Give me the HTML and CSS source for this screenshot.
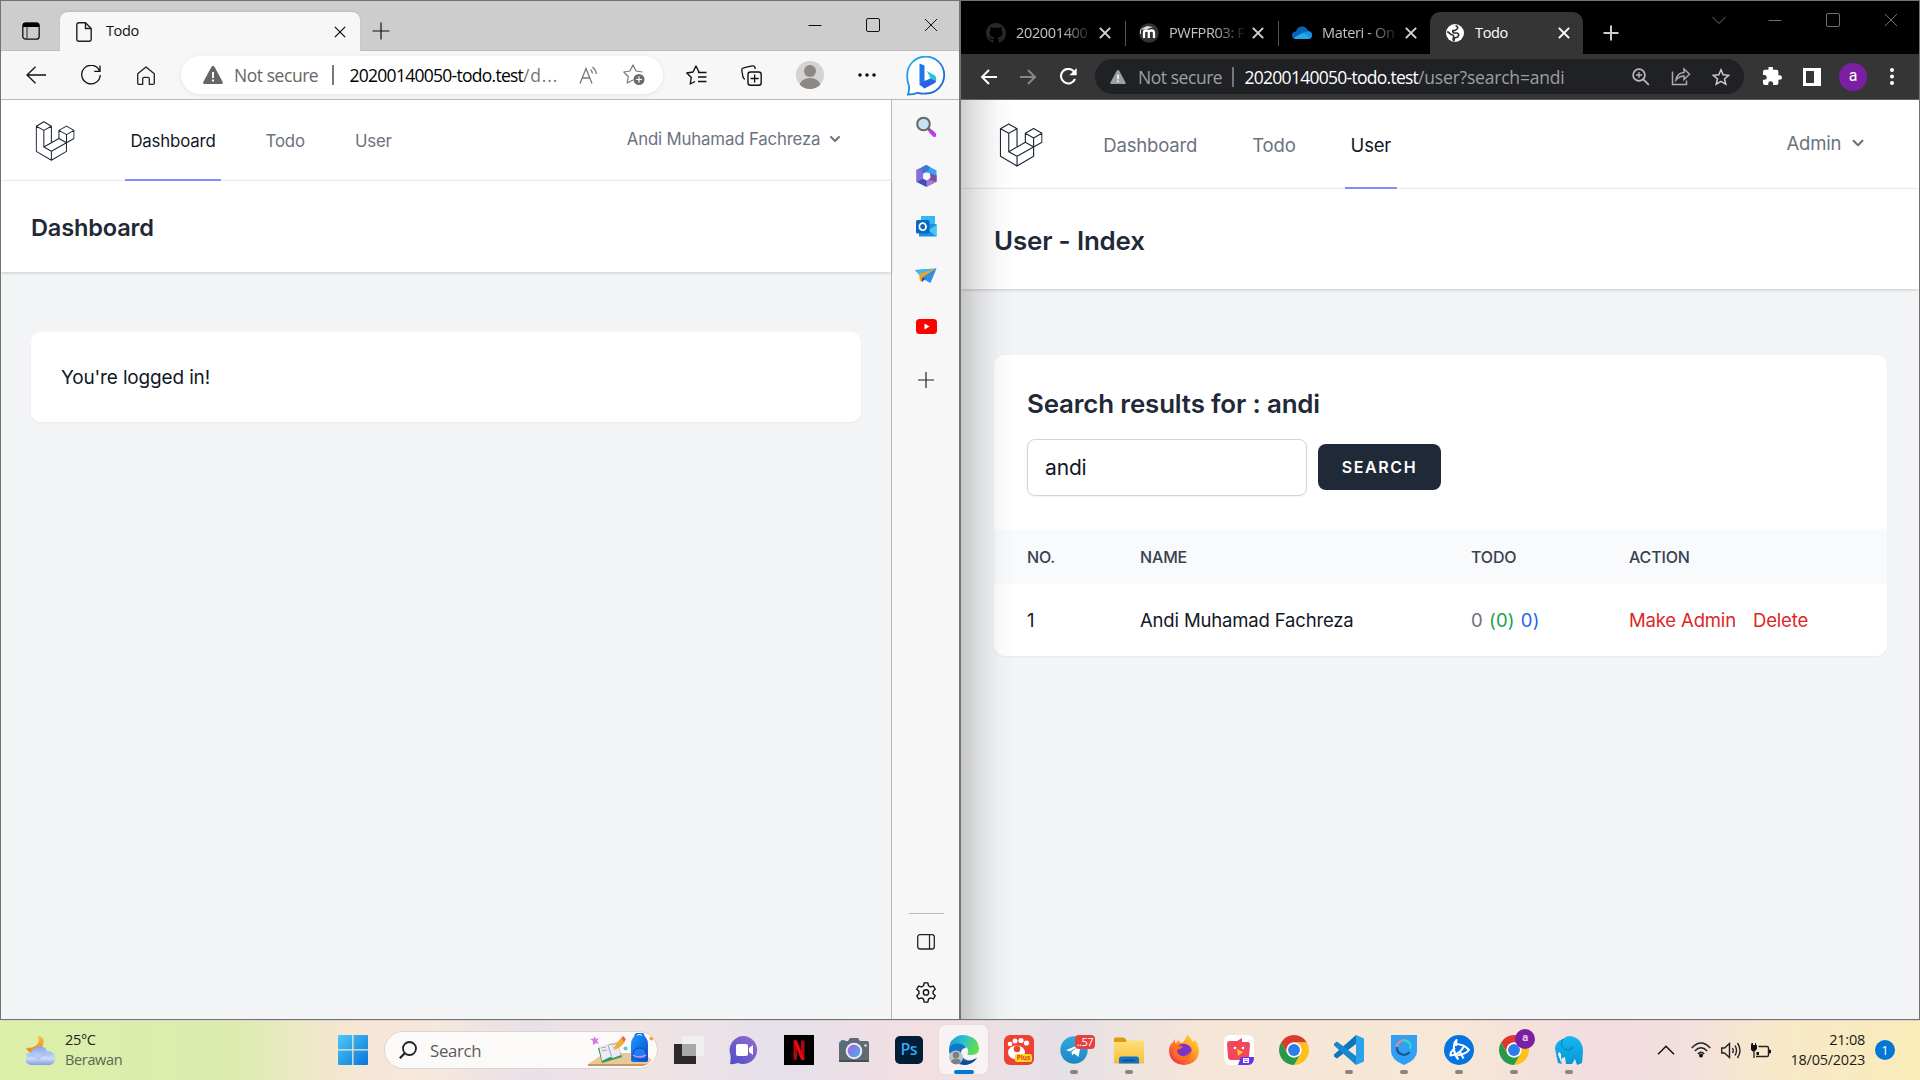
FILE: index.html
```
<!DOCTYPE html>
<html lang="en">
<head>
<meta charset="utf-8">
<title>Desktop</title>
<link rel="stylesheet" href="styles.css">
</head>
<body>
<svg class="defs" aria-hidden="true">
  <defs>
    <linearGradient id="gBlue" x1="0" y1="0" x2="1" y2="1"><stop offset="0" stop-color="#4cc9f8"/><stop offset="1" stop-color="#0a74d8"/></linearGradient>
    <linearGradient id="gBing" x1="0" y1="0" x2="1" y2="1"><stop offset="0" stop-color="#28b8f4"/><stop offset="1" stop-color="#1c50d0"/></linearGradient>
    <linearGradient id="gMoon" x1="0" y1="0" x2="0" y2="1"><stop offset="0" stop-color="#f7bd3c"/><stop offset="1" stop-color="#ee8420"/></linearGradient>
    <linearGradient id="gCloud" x1="0" y1="0" x2="0" y2="1"><stop offset="0" stop-color="#86a5e8"/><stop offset=".65" stop-color="#cbdcf8"/><stop offset="1" stop-color="#7f9fe4"/></linearGradient>
    <linearGradient id="gChat" x1="1" y1="0" x2="0" y2="1"><stop offset="0" stop-color="#9b6ccc"/><stop offset="1" stop-color="#4a4fc8"/></linearGradient>
    <linearGradient id="gLens" x1="0" y1="0" x2="1" y2="1"><stop offset="0" stop-color="#b05ce0"/><stop offset="1" stop-color="#3fb4ee"/></linearGradient>
    <linearGradient id="gEdge" x1="0" y1="0" x2="1" y2="0.3"><stop offset="0" stop-color="#1693dc"/><stop offset=".5" stop-color="#2cc0d0"/><stop offset="1" stop-color="#5fdc50"/></linearGradient>
    <linearGradient id="gTg" x1="0" y1="0" x2="0" y2="1"><stop offset="0" stop-color="#32a9dd"/><stop offset="1" stop-color="#1b86c4"/></linearGradient>
    <linearGradient id="gFolder" x1="0" y1="0" x2="0" y2="1"><stop offset="0" stop-color="#ffe07a"/><stop offset="1" stop-color="#f6bf3a"/></linearGradient>
    <linearGradient id="gFox" x1="1" y1="0" x2="0" y2="1"><stop offset="0" stop-color="#ffe840"/><stop offset=".5" stop-color="#ff8a1e"/><stop offset="1" stop-color="#f0185c"/></linearGradient>
    <linearGradient id="gBag" x1="0" y1="0" x2="1" y2="1"><stop offset="0" stop-color="#1a98ff"/><stop offset="1" stop-color="#0a4ec8"/></linearGradient>
    <linearGradient id="gEle" x1="0" y1="0" x2="0" y2="1"><stop offset="0" stop-color="#14b8f2"/><stop offset="1" stop-color="#0897d4"/></linearGradient>
    <symbol id="laravel" viewBox="0 0 120 122">
      <path fill="none" stroke="#1f2937" stroke-width="3.2" stroke-linejoin="round" d="M26 2.500 49 16 26 28.500 3 16ZM3 16V92.500L49 119.500 95 92.500V66.500M26 28.500V79.500L49 92.500 95 66.500M49 16V66.500M26 79.500 72 53.500 95 66.500M49 92.500V119.500M95 15.500 118 28.500 95 41.500 72 28.500ZM72 28.500V53.500M95 41.500V66.500L118 53.500V28.500"/>
    </symbol>
    <symbol id="chrome" viewBox="2 2 44 44">
      <path fill="#db3b2e" d="M4.950 13A22 22 0 0 1 43.050 13H24A11 11 0 0 0 14.470 29.500Z"/>
      <path fill="#fcc21b" d="M43.050 13A22 22 0 0 1 24 46L33.530 29.500A11 11 0 0 0 24 13Z"/>
      <path fill="#269a48" d="M24 46A22 22 0 0 1 4.950 13L14.470 29.500A11 11 0 0 0 33.530 29.500Z"/>
      <circle cx="24" cy="24" r="11" fill="#fff"/><circle cx="24" cy="24" r="8.700" fill="#2f7bea"/>
    </symbol>
    <symbol id="warn" viewBox="0 0 20 18"><path fill="currentColor" d="M10 0Q11 0 11.600 1L19.700 16Q20.300 18 18.600 18H1.400Q-.3 18 .3 16L8.400 1Q9 0 10 0Z"/><path class="warn-mark" d="M9 6h2v6H9zM9 13.500h2v2H9z"/></symbol>
    <symbol id="chev" viewBox="0 0 20 20"><path fill="currentColor" fill-rule="evenodd" d="M5.293 7.293a1 1 0 011.414 0L10 10.586l3.293-3.293a1 1 0 111.414 1.414l-4 4a1 1 0 01-1.414 0l-4-4a1 1 0 010-1.414z"/></symbol>
    <symbol id="cross" viewBox="0 0 14 14"><path fill="none" stroke="currentColor" d="M1 1 13 13M13 1 1 13"/></symbol>
    <symbol id="square" viewBox="0 0 14 14"><rect x=".5" y=".5" width="13" height="13" rx="1.500" fill="none" stroke="currentColor"/></symbol>
    <symbol id="dash" viewBox="0 0 14 14"><path stroke="currentColor" d="M.5 7.500h13"/></symbol>
  </defs>
</svg>

<main class="desktop">
  <section class="window edge">
    <div class="edge-tabs">
      <span class="edge-actions"><svg width="18" height="18" viewBox="0 0 18 18"><rect x=".8" y=".8" width="16.400" height="16.400" rx="3" fill="none" stroke="#111" stroke-width="1.300"/><path d="M1 1h16v4H1z" fill="#000"/><path d="M5 5v12" stroke="#222"/></svg></span>
      <div class="edge-tab">
        <svg width="16" height="20" viewBox="0 0 16 20"><path fill="none" stroke="#222" stroke-width="1.400" d="M3 .8H9.500L15.200 6.500V17Q15.200 19.200 13 19.200H3Q.8 19.200 .8 17V3Q.8 .8 3 .8ZM9.500 1V6.500H15"/></svg>
        <span class="tab-title">Todo</span>
        <svg class="tab-x" width="12" height="12"><use href="#cross"/></svg>
      </div>
      <svg class="edge-plus" width="18" height="18" viewBox="0 0 18 18"><path d="M9 .5v17M.5 9h17" stroke="#111" stroke-width="1.200"/></svg>
      <div class="win-controls">
        <svg width="14" height="14"><use href="#dash"/></svg><svg width="14" height="14"><use href="#square"/></svg><svg width="14" height="14"><use href="#cross"/></svg>
      </div>
    </div>
    <div class="edge-bar">
      <span class="cell"><svg width="20" height="18" viewBox="0 0 20 18"><path d="M20 9H1M9.500 .7 1 9l8.500 8.300" fill="none" stroke="#111" stroke-width="1.300"/></svg></span>
      <span class="cell"><svg width="20" height="20" viewBox="0 0 20 20"><path d="M18.600 6A9.300 9.300 0 1 0 19.300 10M19 .5V6.300H13.200" fill="none" stroke="#111" stroke-width="1.300"/></svg></span>
      <span class="cell"><svg width="18" height="19" viewBox="0 0 18 19"><path d="M9 .9 17.300 7.800V17Q17.300 18.300 16 18.300H12.300V12.500Q12.300 11.300 11 11.300H7Q5.700 11.300 5.700 12.500V18.300H2Q.7 18.300 .7 17V7.800Z" fill="none" stroke="#222" stroke-width="1.300" stroke-linejoin="round"/></svg></span>
      <div class="edge-url">
        <svg class="warn" width="20" height="18"><use href="#warn"/></svg>
        <span class="not-secure">Not secure</span><i class="url-sep"></i>
        <span class="url"><b>20200140050-todo.test</b><em>/d...</em></span>
        <svg class="read" width="20" height="18" viewBox="0 0 20 18"><path d="M1 17.500 7 2.500l6 15M3.200 12h7.600M11.500 3.500q1.700 1.500 2 4M13.500 1q3.500 3 3.800 7" fill="none" stroke="#777" stroke-width="1.300"/></svg>
        <svg width="22" height="22" viewBox="0 0 22 22"><path d="M19.500 8 13 7 10 1 7 7 .8 8l4.500 4.500L4.200 19 10 16" fill="none" stroke="#777" stroke-width="1.200" stroke-linejoin="round"/><circle cx="16" cy="15.500" r="5.500" fill="#6b6b6b"/><path d="M16 12.500v6M13 15.500h6" stroke="#fff" stroke-width="1.200"/></svg>
      </div>
      <span class="cell first"><svg width="21" height="20" viewBox="0 0 21 20"><path d="M13 7 10 1 7 7 .8 8l4.500 4.500L4.200 19 9 16.500M12 7.500h8.500M12 12h8.500M12 16.500h8.500" fill="none" stroke="#111" stroke-width="1.400" stroke-linejoin="round"/></svg></span>
      <span class="cell"><svg width="21" height="21" viewBox="0 0 21 21"><path d="M4 14Q2.500 14 2 12L.8 5.500Q.6 3.300 2.500 2.800L11 .9Q13.500 .5 14 2.500L14.300 4" fill="none" stroke="#111" stroke-width="1.300"/><rect x="7" y="7" width="13.200" height="13.200" rx="2.500" fill="none" stroke="#111" stroke-width="1.400"/><path d="M13.600 9.500v8M9.600 13.500h8" stroke="#111" stroke-width="1.300"/></svg></span>
      <span class="cell wide"><svg width="28" height="28" viewBox="0 0 28 28"><clipPath id="av"><circle cx="14" cy="14" r="14"/></clipPath><g clip-path="url(#av)"><rect width="28" height="28" fill="#d5d3d0"/><circle cx="14" cy="10" r="6" fill="#8c8885"/><ellipse cx="14" cy="25" rx="10.500" ry="8" fill="#8c8885"/></g></svg></span>
      <span class="cell dots"><svg width="18" height="4" viewBox="0 0 18 4"><g fill="#111"><circle cx="2" cy="2" r="1.800"/><circle cx="9" cy="2" r="1.800"/><circle cx="16" cy="2" r="1.800"/></g></svg></span>
      <span class="cell bing"><svg width="40" height="40" viewBox="0 0 40 40"><path d="M2 38.500Q3.500 34 3 30Q1 25 1.200 19.500A18.500 18.500 0 1 1 20 37.500Q16 38 12 36.800Q7 38.500 2 38.500Z" fill="#fff" stroke="url(#gBing)" stroke-width="1.800"/><path d="M13.500 7.500 18.500 9.500V31.500L13.500 28.500Z" fill="#2175ea"/><path d="M13.500 28.500 18.500 25 29 20.500Q31.500 24 29 27L18.500 32.500Z" fill="#2a62e4"/><path d="M21 15 29 19.500Q31 22 29.500 25L24.500 22.500Z" fill="#2cc6dc"/></svg></span>
    </div>
    <div class="edge-body">
      <div class="page page-left">
        <nav class="nav">
          <svg class="logo" viewBox="0 0 120 122"><use href="#laravel"/></svg>
          <a class="active">Dashboard</a><a>Todo</a><a>User</a>
          <span class="account">Andi Muhamad Fachreza<svg class="chev"><use href="#chev"/></svg></span>
        </nav>
        <header class="page-head"><h2>Dashboard</h2></header>
        <div class="card note">You're logged in!</div>
      </div>
      <aside class="side">
        <span class="side-cell"><svg width="20" height="21" viewBox="0 0 20 21"><circle cx="7.500" cy="8" r="6.300" fill="#c3e4f7" stroke="#666" stroke-width="2"/><path d="m12 12.500 3 3" stroke="#666" stroke-width="3"/><path d="m15 15.500 3.500 3.500" stroke="#bd39ee" stroke-width="4" stroke-linecap="round"/></svg></span>
        <span class="side-cell"><svg width="21" height="22" viewBox="0 0 21 22"><path d="M8 1 10.500 0 20.500 5.500V14L14 11V8.500L8 8Z" fill="#35a4ea"/><path d="M8 1 .5 5V17L7 13.500V9L13 5V1.500L10.500 0Z" fill="#3f78d4"/><path d="M.5 5 5 3 7 9V13.500L.5 17Z" fill="#8a6bd8"/><path d="M7 19 10.500 22 20.500 17V10.500L14.500 8.500V13L10.500 15.500 7 17Z" fill="#a779d8"/><path d="M.5 17 7 13.500 10.500 15.500V22Z" fill="#3a50c0"/><path d="m20.500 10.500-6-2V13l-2 1.500 8 2.500Z" fill="#7a4fa8"/><circle cx="10.500" cy="11" r="3.600" fill="#f7f7f7"/></svg></span>
        <span class="side-cell"><svg width="21" height="21" viewBox="0 0 21 21"><path d="M5 0H19V10H5Z" fill="#35b8f1"/><path d="M3 8H20.500V20.500H3Z" fill="#1b92df"/><path d="m12 14 8.500-5v11.500Z" fill="#43c8f5"/><rect y="4" width="13.500" height="13.500" rx="1.500" fill="#0969be"/><ellipse cx="6.700" cy="10.700" rx="3.300" ry="3.500" fill="none" stroke="#fff" stroke-width="1.800"/></svg></span>
        <span class="side-cell"><svg width="22" height="16" viewBox="0 0 22 16"><path d="M0 2 21.500 .5 15.500 15 10 12Z" fill="#2c8fe8"/><path d="M0 2 21.500 .5 5 8Z" fill="#42b9ee"/><path d="M4 6 21.500 .5 7 9.500V14L5 13Z" fill="#f0a31d"/><path d="m7 14 3.500-3.200L7 9.500Z" fill="#154f9c"/></svg></span>
        <span class="side-cell"><svg width="21" height="15" viewBox="0 0 21 15"><rect width="21" height="15" rx="3.500" fill="#f00"/><path d="m8.500 4.500 5 3-5 3Z" fill="#fff"/></svg></span>
        <span class="side-cell plus"><svg width="16" height="16" viewBox="0 0 16 16"><path d="M8 0v16M0 8h16" stroke="#222" stroke-width="1.200"/></svg></span>
        <i class="side-rule"></i>
        <span class="side-cell"><svg width="18" height="16" viewBox="0 0 18 16"><rect x=".7" y=".7" width="16.600" height="14.300" rx="2.300" fill="none" stroke="#222" stroke-width="1.300"/><path d="M12.500 1v14" stroke="#222" stroke-width="1.200"/></svg></span>
        <span class="side-cell"><svg width="22" height="22" viewBox="0 0 24 24"><path fill="none" stroke="#111" stroke-width="1.500" stroke-linejoin="round" d="M10 2h4l.7 3.200 2.200 1.300 3.200-1 2 3.500-2.400 2.200v2.600l2.400 2.200-2 3.500-3.200-1-2.200 1.300L14 23h-4l-.7-3.200-2.200-1.300-3.200 1-2-3.500 2.400-2.200v-2.600L1.900 9l2-3.500 3.200 1 2.200-1.300Z"/><circle cx="12" cy="12.500" r="2.900" fill="none" stroke="#111" stroke-width="1.500"/></svg></span>
      </aside>
    </div>
  </section>

  <section class="window chrome">
    <div class="ch-tabs">
      <div class="ch-tab"><svg width="20" height="20" viewBox="0 0 16 16"><path fill="#24292e" d="M8 0C3.580 0 0 3.580 0 8c0 3.540 2.290 6.530 5.470 7.590.4.070.55-.17.55-.38 0-.19-.01-.82-.01-1.490-2.010.37-2.530-.49-2.690-.94-.09-.23-.48-.94-.82-1.130-.28-.15-.68-.52-.01-.53.630-.01 1.080.58 1.230.82.720 1.210 1.870.87 2.330.66.070-.52.280-.87.510-1.070-1.780-.2-3.640-.89-3.640-3.950 0-.87.310-1.590.82-2.150-.08-.2-.36-1.020.08-2.120 0 0 .67-.21 2.200.82.640-.18 1.320-.27 2-.27s1.360.09 2 .27c1.530-1.040 2.200-.82 2.200-.82.440 1.100.16 1.920.08 2.120.51.560.82 1.270.82 2.150 0 3.070-1.870 3.750-3.650 3.950.29.250.54.730.54 1.480 0 1.070-.01 1.930-.01 2.200 0 .21.150.46.550.38A8.010 8.010 0 0 0 16 8c0-4.420-3.580-8-8-8z"/></svg><span class="fade">202001400</span><svg class="x" width="12" height="12"><use href="#cross"/></svg></div>
      <div class="ch-tab"><svg width="20" height="20" viewBox="0 0 20 20"><circle cx="10" cy="10" r="9.800" fill="#333"/><path d="M5 15V9.500Q5 7.500 7.300 7.500T9.800 9.500V15M9.800 9.500Q10 7.500 12.400 7.500T15 9.500V15" fill="none" stroke="#fff" stroke-width="2.300"/><path d="M1 6.500 8 3l6 1-7 2.500Z" fill="#ddd"/><path d="M1.500 6.500V11" stroke="#ddd" stroke-width="1"/></svg><span class="fade">PWFPR03: P</span><svg class="x" width="12" height="12"><use href="#cross"/></svg></div>
      <div class="ch-tab"><svg width="20" height="14" viewBox="0 0 20 14"><path d="M4 13Q0 13 0 9.300T4 5.500Q5.500 .5 10 .5T16 5Q20 5.500 20 9.300T16 13Z" fill="#0a63b8"/><path d="M11 7 16 5Q20 5.500 20 9.300T16 13L8 10Z" fill="#1a90e0"/><path d="M1.500 12 11 6.500 18 12 16 13H4Z" fill="#28a8ea"/></svg><span class="fade">Materi - On</span><svg class="x" width="12" height="12"><use href="#cross"/></svg></div>
      <div class="ch-tab on"><svg width="20" height="20" viewBox="0 0 20 20"><circle cx="10" cy="10" r="9" fill="#fff"/><path d="M10.500 2.500Q14 4 12 6T8.500 7.500 8.500 10H12Q14 10.500 13.500 12.500T11 14.500 9 17.500Q7.500 17 8.500 14.500T6 11.500L2.300 8.500" fill="none" stroke="#353535" stroke-width="1.700"/></svg><span>Todo</span><svg class="x" width="12" height="12"><use href="#cross"/></svg></div>
      <svg class="ch-plus" width="16" height="16" viewBox="0 0 16 16"><path d="M8 .5v15M.5 8h15" stroke="#ccc" stroke-width="2"/></svg>
      <div class="win-controls">
        <svg class="drop" width="14" height="14" viewBox="0 0 14 14"><path d="m.5 4 6.500 6.500L13.500 4" fill="none" stroke="currentColor"/></svg><svg width="14" height="14"><use href="#dash"/></svg><svg width="14" height="14"><use href="#square"/></svg><svg width="14" height="14"><use href="#cross"/></svg>
      </div>
    </div>
    <div class="ch-bar">
      <svg class="b1" width="17" height="16" viewBox="0 0 17 16"><path d="M17 8H2M9 1 2 8l7 7" fill="none" stroke="#fff" stroke-width="2"/></svg>
      <svg class="b2" width="17" height="16" viewBox="0 0 17 16"><path d="M0 8h15M8 1l7 7-7 7" fill="none" stroke="#888" stroke-width="2"/></svg>
      <svg class="b3" width="18" height="17" viewBox="0 0 18 17"><path d="M15.300 4A7.300 7.300 0 1 0 16 11" fill="none" stroke="#fff" stroke-width="2.100"/><path d="M17.700 0V7.300H10.400Z" fill="#fff"/></svg>
      <div class="ch-url">
        <svg class="warn" width="16" height="14"><use href="#warn"/></svg>
        <span class="not-secure">Not secure</span><i class="url-sep"></i>
        <span class="url"><b>20200140050-todo.test</b><em>/user?search=andi</em></span>
        <svg width="18" height="18" viewBox="0 0 18 18"><g fill="none" stroke="#bbb" stroke-width="1.700"><circle cx="7" cy="7" r="5.900"/><path d="m11.300 11.300 5.500 5.500"/><path stroke-width="1.300" d="M7 4v6M4 7h6"/></g></svg>
        <svg width="20" height="19" viewBox="0 0 20 19"><g fill="none" stroke="#aaa" stroke-width="1.500"><path d="M1.500 4.500V17.500H15.500V13.500"/><path d="M5 13Q6 6 13 5.500V2l5.500 5.300L13 12.500V9Q8.500 9 5 13Z"/></g></svg>
        <svg width="18" height="18" viewBox="0 0 18 18"><path d="m9 1.700 2.200 5.100 5.500.5-4.200 3.600 1.300 5.400L9 13.400l-4.800 2.900 1.300-5.400L1.300 7.300l5.500-.5Z" fill="none" stroke="#ccc" stroke-width="1.500"/></svg>
      </div>
      <svg class="b4" width="19" height="19" viewBox="2 2 21 21"><path fill="#fff" d="M20.500 11H19V7a2 2 0 0 0-2-2h-4V3.500a2.500 2.500 0 0 0-5 0V5H4a2 2 0 0 0-2 2v3.800h1.500a2.700 2.700 0 0 1 0 5.400H2V20a2 2 0 0 0 2 2h3.800v-1.500a2.700 2.700 0 0 1 5.400 0V22H17a2 2 0 0 0 2-2v-4h1.500a2.500 2.500 0 0 0 0-5z"/></svg>
      <svg class="b5" width="18" height="18" viewBox="0 0 18 18"><path fill="#fff" fill-rule="evenodd" d="M0 0H18V18H0ZM3 3V15H11V3Z"/></svg>
      <span class="avatar">a</span>
      <svg class="b6" width="4" height="17" viewBox="0 0 4 17"><g fill="#fff"><circle cx="2" cy="2" r="2"/><circle cx="2" cy="8.500" r="2"/><circle cx="2" cy="15" r="2"/></g></svg>
    </div>
    <div class="page page-right">
      <nav class="nav">
        <svg class="logo" viewBox="0 0 120 122"><use href="#laravel"/></svg>
        <a>Dashboard</a><a>Todo</a><a class="active">User</a>
        <span class="account">Admin<svg class="chev"><use href="#chev"/></svg></span>
      </nav>
      <header class="page-head"><h2>User - Index</h2></header>
      <div class="card results">
        <h2>Search results for : andi</h2>
        <form class="search-form"><span class="input">andi</span><span class="button">Search</span></form>
        <div class="row thead"><span>No.</span><span>Name</span><span>Todo</span><span>Action</span></div>
        <div class="row"><span>1</span><span class="name">Andi Muhamad Fachreza</span><span class="counts">0 <i class="green">(0)</i> <i class="blue">0)</i></span><span class="links"><a>Make Admin</a><a>Delete</a></span></div>
      </div>
    </div>
  </section>
</main>

<footer class="taskbar">
  <div class="weather">
    <svg width="30" height="29" viewBox="0 0 30 29"><path d="M12 0Q14 5 11 8.500T0 12Q2 17 8 17T17 9 12 0Z" fill="url(#gMoon)"/><path d="M6 29A6.500 6.500 0 0 1 5 16Q8 10.500 14 10.500T21 15.500A6.500 6.500 0 1 1 24 29Z" fill="url(#gCloud)"/><path d="M3 20q6-2 9 3 5-6 12-4" fill="none" stroke="#a9c0f0" stroke-width="1.500"/></svg>
    <div><p>25°C</p><p class="dim">Berawan</p></div>
  </div>
  <svg class="start" width="30" height="30" viewBox="0 0 30 30"><path fill="url(#gBlue)" d="M1 0H14.200V14.200H0V1Q0 0 1 0ZM15.500 0H29Q30 0 30 1V14.200H15.500ZM0 15.500H14.200V30H1Q0 30 0 29ZM15.500 15.500H30V29Q30 30 29 30H15.500Z"/></svg>
  <div class="tb-search">
    <svg width="18" height="18" viewBox="0 0 18 18"><circle cx="10.500" cy="7.500" r="6.500" fill="none" stroke="#222" stroke-width="1.800"/><path d="M6 12 .8 17.300" stroke="#222" stroke-width="2.200"/></svg>
    <span>Search</span>
    <svg class="art" width="66" height="34" viewBox="0 0 66 34"><path d="M0 31 17 20H55L64 27 60 31Z" fill="#e9c79a"/><path d="M0 31H60L55 33H0Z" fill="#c49764"/><path d="m6 3 2 3 3-1-2 3 2 3-3-1-3 2V8L2 6l4-.5Z" fill="#d975ee"/><path d="m10 15 19-6 5 15-20 6Z" fill="#2b9c55"/><path d="m11 13 8-2 3 1 7-4 4 14-8 3-3-1-8 4Z" fill="#eee9f5"/><path d="m20 12 4 13M13 15l5-1M14 18l5-1M24 12l5-2M25 15l5-2" stroke="#a9a4bc"/><path d="M26 17 28 11 33 5 37 9 31 15Z" fill="#f4ae2e"/><path d="m33 5 2-2 3 3-2 3Z" fill="#ec6550"/><circle cx="37.500" cy="15.500" r="2" fill="#56c5dd"/><circle cx="63.500" cy="5.500" r="2" fill="#f6a21c"/><path d="M47 5Q47 0 51.500 0T56 5" fill="none" stroke="#1777e8" stroke-width="2"/><path d="M43 12Q43 2 51.500 2T60 12V28Q60 29 57 29H46Q43 29 43 27Z" fill="url(#gBag)"/><path d="M45 22Q45 15 51.500 15T58 22V26H45Z" fill="#1e7df0" stroke="#0a47b0"/><path d="M45 22Q51 26 58 22" fill="none" stroke="#d78cf0" stroke-width="1.500"/></svg>
  </div>
  <div class="apps">
    <span class="app"><svg width="30" height="30" viewBox="0 0 30 30"><path d="M0 9H22V29H0Z" fill="#2c2b2a"/><path d="M8 1H30V21H8Z" fill="#f1f1f1" opacity=".88"/><path d="M8 9H22V21H8Z" fill="#aaa9a7"/></svg></span>
    <span class="app"><svg width="30" height="30" viewBox="0 0 30 30"><path d="M15 1A14 14 0 1 1 9 28Q5 29.500 1 29 2 25 1.500 20A14 14 0 0 1 15 1Z" fill="url(#gChat)"/><rect x="7" y="9" width="12" height="12" rx="2" fill="#fff"/><path d="m20 13 4-3V20l-4-3Z" fill="#fff"/></svg></span>
    <span class="app"><svg width="30" height="30" viewBox="0 0 30 30"><path d="M0 0H30V30H0Z" fill="#000"/><path d="M9.500 5.500H13V24.500L9.500 25ZM17 5.500H20.500V25L17 24.500Z" fill="#b1060f"/><path d="M9.500 5.500H13L20.500 25 17 24.500Z" fill="#e50914"/></svg></span>
    <span class="app"><svg width="30" height="26" viewBox="0 0 30 26"><path d="M2 3H6V6H2Z" fill="#2196e8"/><path d="M9 4 11 1H19L21 4H28Q30 4 30 6V25H0V7Q0 4 3 4Z" fill="#5f6a72"/><path d="M0 23H30V25H0Z" fill="#475056"/><circle cx="15" cy="14" r="8.300" fill="#e9edf2"/><circle cx="15" cy="14" r="6.300" fill="url(#gLens)"/><circle cx="26.500" cy="8.500" r="1.300" fill="#ddd"/></svg></span>
    <span class="app"><span class="ps">Ps</span></span>
    <span class="app current"><svg width="30" height="30" viewBox="0 0 30 30"><path d="M0 15Q0 7 5 3.500 11-1.500 19 .8 30 4 30 14 29.500 20 22 20 17 20 19 17.500 20 13 15 11T0 15Z" fill="url(#gEdge)"/><path d="M0 15Q1 8.500 8 8.500T17 13Q13 13 12 17 12 23 18 25T28 23Q23 30 15 30 1 29 0 15Z" fill="#1276c8"/><path d="M12 16Q10 22 14 25T28 23Q23 30 15 30 7 28 6 22T12 16Z" fill="#0d4d94"/><circle cx="7" cy="22.500" r="7" fill="#bfc4c7"/><circle cx="7" cy="20" r="3.300" fill="#7c8082"/><path d="M2 27Q3 23.500 7 23.500T12 27Q7 31.500 2 27Z" fill="#7c8082"/></svg></span>
    <span class="app"><span class="gom"><svg width="30" height="30" viewBox="0 0 30 30"><rect width="30" height="30" rx="6" fill="#ee4230"/><ellipse cx="12.500" cy="17.500" rx="8.500" ry="7" fill="#fff"/><circle cx="13" cy="14" r="3.300" fill="#ee4230"/><g fill="#fff"><circle cx="6" cy="9" r="2.300"/><circle cx="11" cy="6" r="2.500"/><circle cx="17" cy="5.500" r="2.600"/><circle cx="22.500" cy="8" r="2.600"/></g></svg><b>Plus</b></span></span>
    <span class="app run"><span class="tg"><svg width="28" height="28" viewBox="0 0 28 28"><circle cx="14" cy="14" r="13.700" fill="url(#gTg)"/><path d="M6 14 21 8 18.500 21 14 17.500 12 19.500 11.500 16 17 11 10 15.500Z" fill="#fff"/></svg><b>..57</b></span></span>
    <span class="app run"><svg width="30" height="27" viewBox="0 0 30 27"><path d="M0 2Q0 .5 1.500 .5H10L13 3.500V9H0Z" fill="#dc9a0c"/><path d="M0 5H11L13.500 3.500H28.500Q30 3.500 30 5V26.500H0Z" fill="url(#gFolder)"/><path d="M5 26.500V22Q5 19.500 7.500 19.500H22.500Q25 19.500 25 22V26.500Z" fill="#1272c6"/><path d="M9 23.500H21" stroke="#0b4f92" stroke-width="1.500"/></svg></span>
    <span class="app"><svg width="30" height="30" viewBox="0 0 30 30"><path d="M4 7Q5 5 6 4V8L9 7 8 4 12 8Q14 8 15 6 17 4 18 0 22 2 23.500 7 26 5.500 26 5 30 10 30 16 29 29 15 30 1 29 0 16 0 10 4 7Z" fill="url(#gFox)"/><path d="M8 11Q13 7 19 10T21 20 11 21 8 11Z" fill="#7a35c8"/><path d="M5 11Q10 9 14 12 12 14 8 15 8 20 13 21T22 16Q23 23 15 25T4 18Z" fill="#ff6f20"/></svg></span>
    <span class="app"><svg width="30" height="30" viewBox="0 0 30 30"><rect width="30" height="30" rx="6" fill="#fff"/><path d="M3 9Q3 6 6 6L13 6 18 3V7H24Q26 7 26 10L25 22Q24 25 22 25H7Q4 25 4 22Z" fill="#f2475c"/><circle cx="11" cy="13" r="1.300" fill="#fff"/><circle cx="19" cy="13" r="1.300" fill="#fff"/><path d="m13 14 6 3-5 4Z" fill="#ffc91f"/><path d="M14 30 17 22H30Q30 30 24 30Z" fill="#6232f5"/><path d="M19 23H25V28H19Z" fill="#fff"/><path d="M20.500 24.500h1M22.500 24.500h1M20.500 26.500h3" stroke="#6232f5"/></svg></span>
    <span class="app"><svg width="30" height="30"><use href="#chrome"/></svg></span>
    <span class="app run"><svg width="30" height="30" viewBox="0 0 30 30"><path d="M22 0 30 3.500V26.500L22 30Z" fill="#2ba2ee"/><path d="M22 0V9L3 23.500 0 21.500V19.500Z" fill="#0e76be"/><path d="M22 30V21L3 6.500 0 8.500V10.500Z" fill="#1688d0"/></svg></span>
    <span class="app run"><svg width="26" height="30" viewBox="0 0 26 30"><path d="M0 0H26V16Q26 25 13 30 0 25 0 16Z" fill="#31a0f4"/><g fill="none" stroke-width="2.200"><path d="M17 6.500A7 7 0 0 0 6 13" stroke="#d98a8a"/><path d="M12 5.700A7 7 0 0 1 19 9M19.300 13.500V8.500" stroke="#2ae0c0"/><path d="M6 12A7 7 0 0 0 18.500 17" stroke="#155a92"/></g></svg></span>
    <span class="app run"><svg width="30" height="30" viewBox="0 0 30 30"><circle cx="15" cy="15" r="15" fill="#0674e4"/><g fill="none" stroke="#fff" stroke-width="2" stroke-linejoin="round"><path d="M12 11 12.500 5Q9 9 10 15T14.500 24.500"/><path d="M11 9Q20 9 25 15 22 19 13 20.500"/><path d="M19.500 12Q15 20 6.500 20.500 6 17 11 13"/><path d="m16 17 3.500 6.500"/></g></svg></span>
    <span class="app run"><span class="profile"><svg width="30" height="30"><use href="#chrome"/></svg><b>a</b></span></span>
    <span class="app run"><svg width="29" height="30" viewBox="0 0 29 30"><path d="M0 13Q1 6 8 4 13-1 19 2 28 5 28 17L27 28 22 30 20 24 17 29H11L10 22 7 23Q5 26 7 29L3 28Q1 20 0 13Z" fill="url(#gEle)"/><path d="M8 4Q4 11 10 14T18 11M6 8.500h1" fill="none" stroke="#0b83bd" stroke-width="1.200"/><path d="M4 17 6 19V27L3 19Z" fill="#fff"/></svg></span>
  </div>
  <div class="tray">
    <svg width="18" height="10" viewBox="0 0 18 10"><path d="M1 9.300 9 1.300l8 8" fill="none" stroke="#111" stroke-width="1.500"/></svg>
    <svg class="wifi" width="20" height="16" viewBox="0 0 20 16"><g fill="none" stroke="#222" stroke-width="1.400"><path d="M.7 6Q10-4 19.300 6M3.800 9Q10 2.500 16.200 9M6.800 12Q10 8.500 13.200 12"/></g><circle cx="10" cy="13.500" r="2" fill="#111"/></svg>
    <svg class="vol" width="20" height="17" viewBox="0 0 20 17"><g fill="none" stroke="#222" stroke-width="1.400"><path d="M.7 6H3.500L8.500 1.500V15.500L3.500 11H.7ZM11.500 6Q13 8.500 11.500 11M14 3.500Q17 8.500 14 13.500M16.500 1Q21.500 8.500 16.500 16"/></g></svg>
    <svg class="bat" width="20" height="15" viewBox="0 0 20 15"><path d="M1 0V2H0V6L2 8H3V15" fill="none" stroke="#111" stroke-width="1.200"/><path d="M0 2H6V6L4 8H2L0 6ZM1 0H2V3H1ZM4 0H5V3H4ZM5.500 9H8V12H5.500ZM18 6.500 20 7V10L18 10.500Z" fill="#111"/><path d="M7.500 3.500H16Q17.500 3.500 17.500 5V12Q17.500 13.500 16 13.500H5" fill="none" stroke="#222" stroke-width="1.400"/></svg>
    <div class="clock"><p>21:08</p><p>18/05/2023</p></div>
    <span class="count">1</span>
  </div>
</footer>
</body>
</html>
```
FILE: styles.css
```
* { box-sizing: border-box; margin: 0; padding: 0; }
body { width: 1920px; height: 1080px; overflow: hidden; font-family: "Open Sans", "Noto Sans", sans-serif; display: flex; flex-direction: column; }
svg { display: block; flex: none; }
i, em { font-style: normal; }
.defs { position: absolute; width: 0; height: 0; }
.desktop { display: flex; height: 1020px; }
.window { width: 960px; height: 1020px; border: 1px solid #737373; display: flex; flex-direction: column; overflow: hidden; position: relative; }
.url b { font-weight: 400; }

/* Edge chrome */
.edge { background: #f7f7f7; }
.edge-tabs { height: 50px; background: #cdcdcd; display: flex; align-items: flex-start; box-shadow: inset 0 -1px #bdbdbd; }
.edge-actions { padding: 21px 20px 0 21px; width: 59px; }
.edge-tab { width: 300px; height: 39px; margin-top: 11px; padding: 0 14px 0 16px; border-radius: 8px 8px 0 0; background: #f7f7f7; display: flex; align-items: center; gap: 14px; box-shadow: 0 -1px 2px #bbb; }
.tab-title { font-size: 14.500px; letter-spacing: -.4px; line-height: 20px; padding-bottom: 2px; color: #111; }
.tab-x { margin-left: auto; color: #111; }
.edge-plus { margin: 21px 0 0 12px; }
.win-controls { margin-left: auto; display: flex; gap: 44px; padding: 17px 21px 0 0; color: #111; }
.edge-bar { height: 49px; display: flex; align-items: center; padding-left: 7px; border-bottom: 1px solid #b9b9b9; }
.cell { width: 55px; flex: none; display: flex; justify-content: center; }
.cell.first { margin-left: 6px; }
.cell.wide { width: 61px; }
.cell.dots { width: 54px; }
.cell.bing { width: 64px; padding-top: 1px; }
.edge-url { width: 482px; height: 38px; margin-left: 8px; flex: none; border-radius: 19px; background: #fff; display: flex; align-items: center; padding: 0 18px 0 22px; box-shadow: 0 1px 5px #e4e4e4; font-size: 17.500px; white-space: nowrap; }
.edge-url .warn { color: #666; }
.warn-mark { fill: #fff; }
.ch-url .warn-mark { fill: #202124; }
.not-secure { width: 98px; margin-left: 11px; letter-spacing: -.45px; color: #666; }
.url-sep { width: 1.500px; height: 20px; background: #777; margin-right: 16px; }
.url { flex: 1; color: #000; letter-spacing: -.73px; }
.url em { color: #777; }
.edge-url em { letter-spacing: .8px; }
.edge-url .read { margin-right: 24px; }
.edge-body { flex: 1; display: flex; }

/* Web pages */
.page { --u: 1.25px; font-family: Inter, "Open Sans", sans-serif; background: #f3f4f6; letter-spacing: -.01em; }
.page-left { width: 891px; border-right: 1px solid #b9b9b9; }
.page-right { --u: 1.375px; flex: 1; }
.nav { height: calc(65 * var(--u)); background: #fff; border-bottom: 1px solid #eee; display: flex; padding-left: calc(27.500 * var(--u)); font-size: calc(13.450 * var(--u)); color: #6b7280; }
.logo { width: calc(32 * var(--u)); height: calc(32 * var(--u)); margin: calc(16.500 * var(--u)) calc(40 * var(--u)) 0 0; }
.nav a { height: calc(65 * var(--u)); padding: calc(3 * var(--u)) calc(4 * var(--u)) 0; margin-right: calc(32 * var(--u)); line-height: calc(60 * var(--u)); border-bottom: 2px solid transparent; }
.nav a.active { color: #111827; border-color: #818cf8; }
.account { margin-left: auto; display: flex; align-items: center; height: calc(62 * var(--u)); padding-top: calc(1 * var(--u)); gap: calc(4 * var(--u)); padding-right: calc(36.500 * var(--u)); }
.chev { width: calc(16 * var(--u)); height: calc(16 * var(--u)); }
.page-head { background: #fff; height: calc(72.400 * var(--u)); padding: calc(27 * var(--u)) calc(24 * var(--u)) 0; box-shadow: 0 1px 3px rgba(0,0,0,.18); }
.page h2 { font-size: calc(18.850 * var(--u)); font-weight: 600; line-height: calc(20 * var(--u)); color: #1f2937; }
.card { background: #fff; border-radius: calc(8 * var(--u)); box-shadow: 0 1px 2px rgba(0,0,0,.05); margin: calc(48 * var(--u)) calc(24 * var(--u)) 0; }
.note { height: 90px; padding: 31px 30px; font-size: 19px; line-height: 30px; color: #111827; }
.results { height: 301px; margin-top: 66px; margin-right: 32px; overflow: hidden; }
.results h2 { padding: 35px 33px 0; line-height: 28px; }
.search-form { display: flex; align-items: center; gap: 11px; padding: 21px 33px 33px; height: 111px; }
.input { width: 280px; height: 57px; border: 1px solid #d1d5db; border-radius: 8px; padding-left: 17px; line-height: 55px; font-size: 21px; color: #111827; box-shadow: 0 1px 2px rgba(0,0,0,.06); }
.button { width: 123px; height: 46px; border-radius: 8px; background: #1f2937; color: #fff; font-size: 16px; font-weight: 600; letter-spacing: .1em; text-transform: uppercase; line-height: 47px; text-align: center; }
.row { height: 72px; display: grid; grid-template-columns: 113px 331px 158px 1fr; padding: 0 33px; align-items: center; font-size: 18.500px; color: #111827; }
.thead { height: 55px; padding-top: 1px; background: #f9fafb; color: #374151; font-size: 16px; font-weight: 500; text-transform: uppercase; }
.counts { color: #6b7280; word-spacing: 1px; letter-spacing: .1px; }
.green { color: #16a34a; }
.blue { color: #2563eb; }
.links { display: flex; gap: 17px; color: #dc2626; }

/* Edge sidebar */
.side { width: 67px; display: flex; flex-direction: column; align-items: center; padding: 1px 0 2px 1px; }
.side-cell { height: 50px; display: flex; align-items: center; flex: none; }
.side-cell.plus { margin-top: 4px; }
.side-rule { margin-top: auto; width: 35px; height: 1px; background: #bbb; margin-bottom: 3px; }

/* Chrome */
.chrome::after { content: ""; position: absolute; left: 0; top: 99px; bottom: 0; width: 54px; background: linear-gradient(90deg, rgba(0,0,0,.19), rgba(0,0,0,.1) 30%, rgba(0,0,0,.025) 70%, transparent); }
.ch-tabs { height: 53px; background: #000; display: flex; padding-left: 10px; flex: none; }
.ch-tab { width: 153px; height: 42px; margin-top: 11px; padding: 0 13px 0 15px; display: flex; align-items: center; font-size: 14.500px; letter-spacing: -.35px; color: #c4c4c4; position: relative; }
.ch-tab span { width: 75px; flex: none; margin-left: 10px; overflow: hidden; white-space: nowrap; line-height: 20px; }
.ch-tab .fade { -webkit-mask-image: linear-gradient(90deg, #000 60%, rgba(0,0,0,.1)); mask-image: linear-gradient(90deg, #000 60%, rgba(0,0,0,.1)); }
.ch-tab .x { margin-left: 8px; color: #d4d4d4; }
.ch-tab .x, .tab-x { stroke-width: 1.500; }
.ch-tab .x { stroke-width: 2.300; }
.ch-tab:nth-child(-n+2)::after { content: ""; position: absolute; right: -2px; top: 9px; width: 1px; height: 25px; background: #555; }
.ch-tab.on { background: #353535; border-radius: 10px 10px 0 0; color: #fff; }
.ch-tab.on .x { color: #fff; }
.ch-plus { margin: 24px 0 0 20px; }
.chrome .win-controls { color: #707070; padding-top: 12px; }
.chrome .drop { margin-right: -2px; }
.ch-bar { height: 46px; background: #353535; border-bottom: 1px solid #606060; display: flex; align-items: center; flex: none; }
.b1 { margin-left: 19px; } .b2 { margin-left: 23px; } .b3 { margin-left: 22px; }
.ch-url { width: 649px; height: 35px; margin-left: 18px; border-radius: 18px; background: #202124; display: flex; align-items: center; padding: 0 14px 0 15px; font-size: 17.500px; white-space: nowrap; }
.ch-url .warn { color: #9aa0a6; }
.ch-url .not-secure { width: 94px; margin-left: 12px; color: #9aa0a6; }
.ch-url .url-sep { margin-right: 11px; }
.ch-url .url { color: #fff; }
.ch-url em { color: #9aa0a6; letter-spacing: -.2px; }
.ch-url svg:nth-last-child(-n+2) { margin-left: 21px; }
.b4 { margin-left: 19px; } .b5 { margin-left: 21px; } .b6 { margin-left: 23px; }
.avatar { width: 28px; height: 28px; margin-left: 18px; border-radius: 50%; background: #7b1fa2; color: #fff; text-align: center; font: 16px/26px Roboto, sans-serif; }

/* Taskbar */
.taskbar { height: 60px; display: flex; align-items: center; padding-bottom: 1px; border-top: 1px solid #dcd3d0; background: linear-gradient(90deg, #dcf0a8 0, #dcecae 230px, #eee8c8 310px, #f7e6d8 370px, #f5e8dc 440px, #e9e0e8 530px, #f0e4e4 640px, #e5e0ea 780px, #f3dfe2 920px, #e5e0e6 1060px, #f6e6d8 1200px, #f7e7d6 1460px, #f2dce0 1590px, #f3dedf 1680px, #f8e8cc 1760px, #f9ecb8 1920px); }
.weather { width: 312px; padding-left: 26px; display: flex; align-items: center; gap: 9px; font-size: 14.500px; line-height: 20px; letter-spacing: -.35px; color: #222; }
.weather .dim { color: #5c6650; }
.start { margin-left: 26px; }
.tb-search { width: 274px; height: 38px; margin-left: 16px; border: 1px solid #ddd4d2; border-radius: 19px; background: #fcf9f9; display: flex; align-items: center; padding: 0 0 0 14px; font-size: 16.800px; letter-spacing: -.3px; color: #5d5a5a; overflow: hidden; }
.tb-search span { margin-left: 13px; }
.art { margin-left: auto; margin-right: 3px; }
.apps { display: flex; margin-left: 3px; }
.app { width: 55.050px; height: 60px; display: flex; align-items: center; justify-content: center; position: relative; }
.run::after, .current::after { content: ""; position: absolute; bottom: 6px; width: 8px; height: 4px; border-radius: 2px; background: #8a8583; }
.current::after { width: 20px; background: #0078d4; }
.current::before { content: ""; position: absolute; left: 3px; top: 5px; width: 49px; height: 49px; border-radius: 6px; background: rgba(255,255,255,.6); box-shadow: 0 0 1px #bbb; }
.current svg { position: relative; }
.ps { width: 28px; height: 28px; border-radius: 5px; background: #001e36; color: #31a8ff; font: 600 16px/27px "Open Sans", sans-serif; text-align: center; letter-spacing: -.5px; }
.gom, .tg, .profile { position: relative; }
.gom b { position: absolute; right: 2px; bottom: 3px; background: #ffd91c; border-radius: 2px; color: #e2392b; font: 700 6.500px/8px "Open Sans", sans-serif; padding: 0 1.500px; }
.tg b { position: absolute; left: 15px; top: -1px; width: 20px; height: 14px; border-radius: 4px; background: #e8403f; color: #fff; font: 11px/14px "Open Sans", sans-serif; text-align: center; letter-spacing: -.5px; }
.profile b { position: absolute; left: 16px; top: -6px; width: 20px; height: 20px; border-radius: 50%; background: #7b1fa2; color: #e5cff0; font: 700 11px/18px Roboto, sans-serif; text-align: center; }
.tray { margin-left: auto; display: flex; align-items: center; padding-right: 25px; }
.wifi { margin-left: 16px; } .vol { margin-left: 10px; } .bat { margin-left: 10px; }
.clock { width: 94px; text-align: right; font-size: 14.500px; line-height: 20px; letter-spacing: -.25px; color: #1c1c1c; }
.count { width: 20px; height: 20px; margin-left: 10px; border-radius: 50%; background: #0078d4; color: #fff; font-size: 13px; line-height: 20px; text-align: center; }
```
